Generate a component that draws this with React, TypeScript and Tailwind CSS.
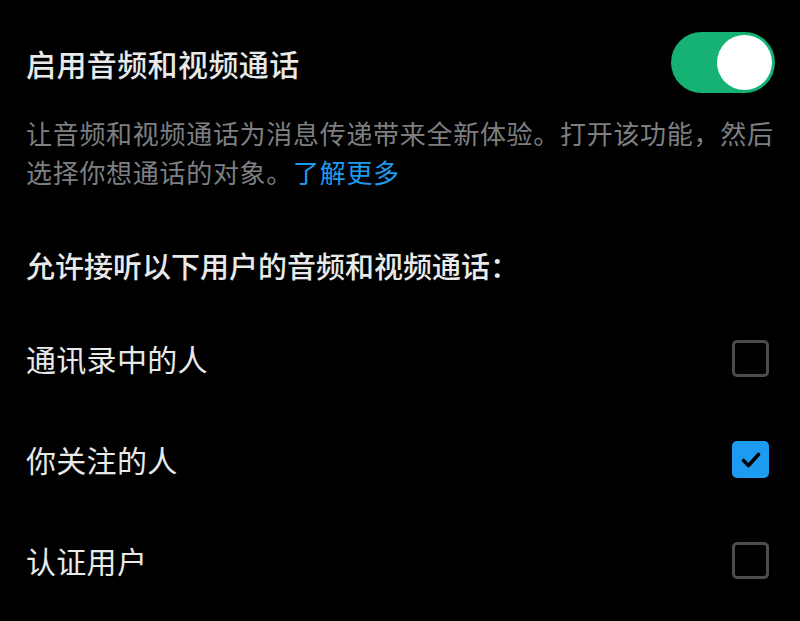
import React, { useState } from 'react';

const font = { fontFamily: '"Noto Sans CJK SC", "Noto Sans", sans-serif' };

const Checkbox: React.FC<{ checked: boolean; onChange: () => void }> = ({ checked, onChange }) => (
  <button
    type="button"
    onClick={onChange}
    className={
      checked
        ? 'w-[37px] h-[37px] rounded-[5px] bg-[#1d9bf0] flex items-center justify-center'
        : 'w-[37px] h-[37px] rounded-[5px] border-[3px] border-[#4a4d50]'
    }
  >
    {checked && (
      <svg width="24" height="24" viewBox="0 0 24 24">
        <path d="M4.5 12.5 L9.5 17.5 L19.5 6.5" fill="none" stroke="#000" strokeWidth="3.6" strokeLinecap="round" strokeLinejoin="round" />
      </svg>
    )}
  </button>
);

const App: React.FC = () => {
  const [enabled, setEnabled] = useState(true);
  const [contacts, setContacts] = useState(false);
  const [following, setFollowing] = useState(true);
  const [verified, setVerified] = useState(false);

  const rows = [
    { label: '通讯录中的人', value: contacts, toggle: () => setContacts(!contacts) },
    { label: '你关注的人', value: following, toggle: () => setFollowing(!following) },
    { label: '认证用户', value: verified, toggle: () => setVerified(!verified) },
  ];

  return (
    <div className="w-[800px] h-[621px] bg-black overflow-hidden pl-[26px] pr-[25px] pt-[32px]" style={font}>
      {/* Toggle row */}
      <div className="flex items-center justify-between h-[61px]">
        <span className="text-[30px] font-medium tracking-[0.4px] text-[#e7e9ea] leading-none">启用音频和视频通话</span>
        <button
          type="button"
          onClick={() => setEnabled(!enabled)}
          className={`w-[104px] h-[61px] rounded-full flex items-center px-[3px] ${enabled ? 'bg-[#15b273] justify-end' : 'bg-[#3e4144] justify-start'}`}
        >
          <span className="w-[55px] h-[55px] rounded-full bg-white block" />
        </button>
      </div>

      {/* Description */}
      <p className="mt-[20px] text-[26px] leading-[39px] tracking-[0.7px] text-[#7d7f82]">
        让音频和视频通话为消息传递带来全新体验。打开该功能，然后选择你想通话的对象。
        <span className="text-[#1d9bf0]">了解更多</span>
      </p>

      {/* Heading */}
      <h2 className="mt-[54px] text-[29px] leading-[40px] font-medium text-[#e7e9ea]">
        允许接听以下用户的音频和视频通话：
      </h2>

      {/* Options */}
      <div className="mt-[23px] pr-[6px]">
        {rows.map((row) => (
          <div key={row.label} className="flex items-center justify-between h-[101px]">
            <span className="text-[30px] tracking-[0.3px] text-[#e7e9ea]">{row.label}</span>
            <Checkbox checked={row.value} onChange={row.toggle} />
          </div>
        ))}
      </div>
    </div>
  );
};

export default App;
